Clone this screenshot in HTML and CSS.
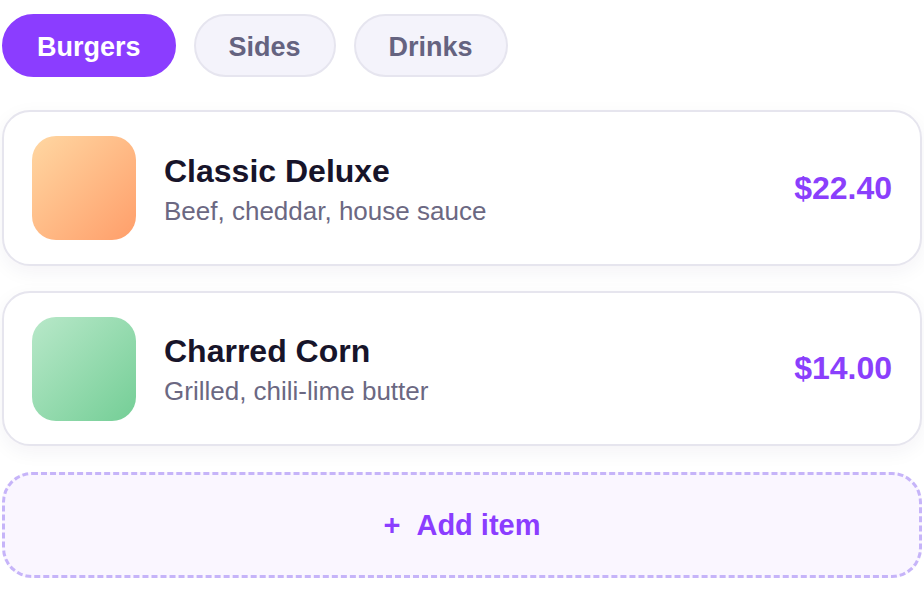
FILE: index.html
```html
<!DOCTYPE html>
<html lang="en">
<head>
    <meta charset="UTF-8">
    <meta name="viewport" content="width=device-width, initial-scale=1.0">
    <title>Menu</title>
    <link rel="stylesheet" href="styles.css">
</head>
<body>
    <div class="menu">
        <div class="tabs">
            <button class="tab active">Burgers</button>
            <button class="tab">Sides</button>
            <button class="tab">Drinks</button>
        </div>

        <div class="item">
            <div class="thumb orange"></div>
            <div class="info">
                <div class="name">Classic Deluxe</div>
                <div class="desc">Beef, cheddar, house sauce</div>
            </div>
            <div class="price">$22.40</div>
        </div>

        <div class="item">
            <div class="thumb green"></div>
            <div class="info">
                <div class="name">Charred Corn</div>
                <div class="desc">Grilled, chili-lime butter</div>
            </div>
            <div class="price">$14.00</div>
        </div>

        <button class="add"><span class="plus">+</span>Add item</button>
    </div>
</body>
</html>
```

FILE: styles.css
```css
body {
    margin: 0;
    padding: 0;
    background-color: #ffffff;
    font-family: "Liberation Sans", Arial, sans-serif;
}
.menu {
    padding: 14px 2px;
    display: flex;
    flex-direction: column;
    gap: 25px;
}
.tabs {
    display: flex;
    gap: 18px;
    margin-bottom: 8px;
}
.tab {
    height: 63px;
    padding: 3px 33px 0;
    border-radius: 999px;
    border: 2px solid #e6e5ef;
    background-color: #f4f3fb;
    color: #656380;
    font-family: inherit;
    font-size: 27px;
    font-weight: bold;
}
.tab.active {
    background-color: #8b3dff;
    border-color: #8b3dff;
    color: #ffffff;
}
.item {
    display: flex;
    align-items: center;
    gap: 28px;
    padding: 24px 28px 23.5px;
    border: 2px solid #e6e5ee;
    border-radius: 28px;
    background-color: #ffffff;
    box-shadow: 0 6px 20px rgba(30, 25, 70, 0.05);
}
.thumb {
    width: 104px;
    height: 104px;
    border-radius: 24px;
    flex-shrink: 0;
}
.thumb.orange {
    background: linear-gradient(135deg, #ffd7a2, #ff9e6a);
}
.thumb.green {
    background: linear-gradient(135deg, #b8e8c9, #74ce96);
}
.info {
    flex: 1;
    padding-top: 2px;
}
.name {
    font-size: 32px;
    font-weight: bold;
    line-height: 38px;
    color: #17142a;
}
.desc {
    margin-top: 5px;
    font-size: 26px;
    line-height: 32px;
    color: #6b6882;
}
.price {
    font-size: 32px;
    font-weight: bold;
    color: #8a3ffc;
}
.add {
    height: 106px;
    margin-top: 1px;
    border: 3px dashed #c6b4f9;
    border-radius: 30px;
    background-color: #faf6ff;
    color: #8b3dff;
    font-family: inherit;
    font-size: 29px;
    font-weight: bold;
}
.plus {
    margin-right: 16px;
}
```
